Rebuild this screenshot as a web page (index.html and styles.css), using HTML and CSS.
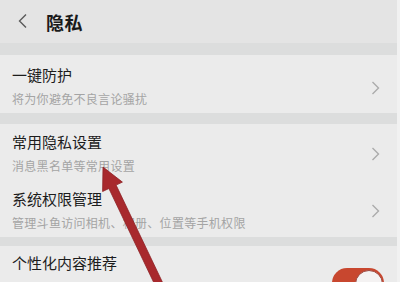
FILE: index.html
```html
<!DOCTYPE html>
<html lang="zh">
<head>
<meta charset="utf-8">
<link rel="stylesheet" href="styles.css">
</head>
<body>
<div class="page">
  <header class="header">
    <svg class="back" width="12" height="16" viewBox="0 0 12 16"><polyline points="9,1.5 2.5,8 9,14.5" fill="none" stroke="#5a5a5a" stroke-width="1.4"/></svg>
    <h1 class="title">隐私</h1>
  </header>
  <div class="sep sep1"></div>
  <div class="row row1">
    <div class="text">
      <div class="label">一键防护</div>
      <div class="sub">将为你避免不良言论骚扰</div>
    </div>
    <svg class="chev" width="9" height="14" viewBox="0 0 9 14"><polyline points="1.5,1 7.5,7 1.5,13" fill="none" stroke="#ababab" stroke-width="1.4"/></svg>
  </div>
  <div class="sep sep2"></div>
  <div class="row row2">
    <div class="text">
      <div class="label">常用隐私设置</div>
      <div class="sub">消息黑名单等常用设置</div>
    </div>
    <svg class="chev" width="9" height="14" viewBox="0 0 9 14"><polyline points="1.5,1 7.5,7 1.5,13" fill="none" stroke="#ababab" stroke-width="1.4"/></svg>
  </div>
  <div class="row row3">
    <div class="text">
      <div class="label">系统权限管理</div>
      <div class="sub">管理斗鱼访问相机、相册、位置等手机权限</div>
    </div>
    <svg class="chev" width="9" height="14" viewBox="0 0 9 14"><polyline points="1.5,1 7.5,7 1.5,13" fill="none" stroke="#ababab" stroke-width="1.4"/></svg>
  </div>
  <div class="sep sep3"></div>
  <div class="row row4">
    <div class="text">
      <div class="label">个性化内容推荐</div>
    </div>
    <div class="toggle"><div class="knob"></div></div>
  </div>
  <svg class="arrow" width="400" height="282" viewBox="0 0 400 282">
    <polygon points="103,167 122.4,182.1 116.1,185.1 166.3,290.3 159.1,293.7 108.9,188.5 102.6,191.5" fill="#a8292d" stroke="#8e2226" stroke-width="0.8" stroke-linejoin="round"/>
  </svg>
</div>
</body>
</html>
```

FILE: styles.css
```css
html, body {
  margin: 0;
  padding: 0;
  background: #efefef;
}
.page {
  position: relative;
  width: 400px;
  height: 282px;
  overflow: hidden;
  font-family: "Noto Sans CJK SC", "Noto Sans", sans-serif;
  background: #ebebeb;
  border-right: 3px solid #f1f1f1;
  box-sizing: border-box;
}
.header {
  height: 43px;
  background: #e4e4e4;
  display: flex;
  align-items: center;
  box-sizing: border-box;
  padding-left: 17px;
}
.back {
  display: block;
  margin-top: -1px;
}
.title {
  margin: 0 0 0 17px;
  font-size: 18px;
  line-height: 22px;
  font-weight: 700;
  color: #1a1a1a;
  letter-spacing: 0.5px;
}
.sep {
  background: #dcdddd;
}
.sep1 { height: 12px; }
.sep2 { height: 11px; }
.sep3 { height: 9px; }
.row {
  display: flex;
  align-items: flex-start;
  justify-content: space-between;
  padding: 0 17px 0 12px;
  box-sizing: border-box;
  background: #ebebeb;
}
.row1 { height: 58px; padding-top: 10px; }
.row2 { height: 57px; padding-top: 8px; }
.row3 { height: 56px; padding-top: 8px; }
.row4 { height: 60px; padding-top: 7px; }
.text {
  display: flex;
  flex-direction: column;
  gap: 6px;
}
.label {
  font-size: 15px;
  line-height: 20px;
  color: #1c1c1c;
}
.sub {
  font-size: 12px;
  line-height: 16px;
  color: #a4a4a4;
  letter-spacing: 0.3px;
  white-space: nowrap;
}
.chev {
  display: block;
  margin-top: 15px;
}
.row1 .chev { margin-top: 16px; }
.toggle {
  width: 52px;
  height: 30px;
  border-radius: 15px;
  background: #c8472f;
  margin-top: 15px;
  margin-right: -4px;
  position: relative;
  box-sizing: border-box;
}
.knob {
  position: absolute;
  right: 1px;
  top: 2px;
  width: 28px;
  height: 28px;
  border-radius: 50%;
  background: #f4f2f2;
  border: 1px solid #9c4a42;
  box-sizing: border-box;
}
.arrow {
  position: absolute;
  left: 0;
  top: 0;
  pointer-events: none;
}
```
